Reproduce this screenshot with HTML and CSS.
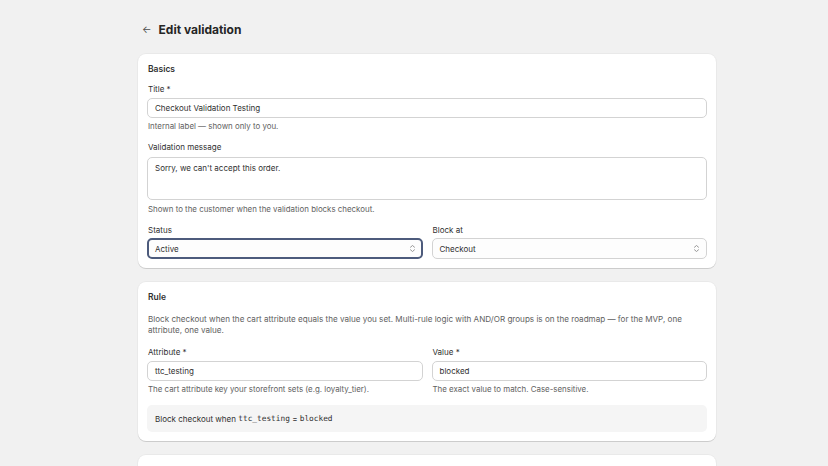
FILE: index.html
```html
<!DOCTYPE html>
<html lang="en">
    <head>
        <meta charset="UTF-8">
        <meta name="viewport" content="width=device-width,initial-scale=1.0">
        <title>Edit validation</title>
        <link rel="stylesheet" href="styles.css">
    </head>
    <body>
        <div class="page">
            <div class="header">
                <span class="back">&larr;</span>
                <h1>Edit validation</h1>
            </div>

            <div class="card">
                <h2>Basics</h2>
                <div class="field">
                    <label>Title *</label>
                    <div class="input">Checkout Validation Testing</div>
                    <p class="help">Internal label — shown only to you.</p>
                </div>
                <div class="field">
                    <label>Validation message</label>
                    <div class="input textarea">Sorry, we can't accept this order.</div>
                    <p class="help">Shown to the customer when the validation blocks checkout.</p>
                </div>
                <div class="row">
                    <div class="field">
                        <label>Status</label>
                        <div class="input select focused">
                            <span>Active</span>
                            <svg width="7" height="9" viewBox="0 0 7 9"><path d="M1.5 3.2 3.5 1.5 5.5 3.2M1.5 5.8 3.5 7.5 5.5 5.8" fill="none" stroke="#8a8a8a" stroke-width="0.9" stroke-linecap="round" stroke-linejoin="round"/></svg>
                        </div>
                    </div>
                    <div class="field">
                        <label>Block at</label>
                        <div class="input select">
                            <span>Checkout</span>
                            <svg width="7" height="9" viewBox="0 0 7 9"><path d="M1.5 3.2 3.5 1.5 5.5 3.2M1.5 5.8 3.5 7.5 5.5 5.8" fill="none" stroke="#8a8a8a" stroke-width="0.9" stroke-linecap="round" stroke-linejoin="round"/></svg>
                        </div>
                    </div>
                </div>
            </div>

            <div class="card">
                <h2>Rule</h2>
                <p class="desc">Block checkout when the cart attribute equals the value you set. Multi-rule logic with AND/OR groups is on the roadmap — for the MVP, one attribute, one value.</p>
                <div class="row">
                    <div class="field">
                        <label>Attribute *</label>
                        <div class="input">ttc_testing</div>
                        <p class="help">The cart attribute key your storefront sets (e.g. loyalty_tier).</p>
                    </div>
                    <div class="field">
                        <label>Value *</label>
                        <div class="input">blocked</div>
                        <p class="help">The exact value to match. Case-sensitive.</p>
                    </div>
                </div>
                <div class="summary">Block checkout when <code>ttc_testing</code> = <code>blocked</code></div>
            </div>

            <div class="card last"></div>
        </div>
    </body>
</html>
```

FILE: styles.css
```css
body {
    margin: 0;
    background: #f1f1f1;
    font-family: Inter, "Noto Sans", sans-serif;
    color: #303030;
    overflow: hidden;
    height: 466px;
}

.page {
    width: 578px;
    padding: 18px 0 0 138px;
}

.header {
    display: flex;
    align-items: center;
    gap: 7px;
    height: 22px;
    padding-left: 4px;
    margin-bottom: 14px;
}

.back {
    font-size: 10px;
    color: #4a4a4a;
}

h1 {
    margin: 0;
    font-size: 12px;
    font-weight: 700;
    color: #252525;
}

.card {
    background: white;
    border-radius: 8px;
    padding: 9px;
    margin-bottom: 14px;
    box-shadow: 0 1px 0 rgba(0, 0, 0, 0.12), 0 0 0 1px rgba(0, 0, 0, 0.03);
    display: flex;
    flex-direction: column;
}

.card.last {
    height: 40px;
}

h2 {
    margin: 0 0 9px 1px;
    font-size: 8.5px;
    line-height: 12px;
    font-weight: 600;
}

.field {
    display: flex;
    flex-direction: column;
    margin-bottom: 11px;
    flex: 1;
}

label {
    font-size: 8px;
    line-height: 11px;
    margin: 0 0 3px 1px;
    color: #303030;
}

.input {
    height: 20px;
    box-sizing: border-box;
    border: 1px solid #d3d3d3;
    border-radius: 5px;
    padding: 0 7px;
    font-size: 8px;
    display: flex;
    align-items: center;
    background: white;
}

.textarea {
    height: 43px;
    align-items: flex-start;
    padding-top: 5px;
    margin-top: 1px;
}

.textarea + .help {
    margin-top: 4px;
}

.select {
    height: 21px;
    justify-content: space-between;
    padding-right: 6px;
    background: #fdfdfd;
}

.select.focused {
    border: 2px solid #4d5b7c;
    padding-left: 6px;
    padding-right: 5px;
}

.help {
    margin: 3px 0 0 1px;
    font-size: 7.9px;
    line-height: 10px;
    color: #616161;
}

.row {
    display: flex;
    gap: 9px;
}

.row .field {
    margin-bottom: 0;
    min-width: 0;
}

.row .select {
    margin-top: -1px;
}

.desc {
    margin: 2px 0 11px 1px;
    font-size: 8.1px;
    line-height: 11px;
    color: #616161;
}

.summary {
    margin-top: 11px;
    height: 27px;
    background: #f5f5f5;
    border-radius: 5px;
    display: flex;
    align-items: center;
    padding: 0 8px;
    font-size: 8px;
    white-space: pre;
}

code {
    font-family: "DejaVu Sans Mono", monospace;
    font-size: 7.8px;
}
```
